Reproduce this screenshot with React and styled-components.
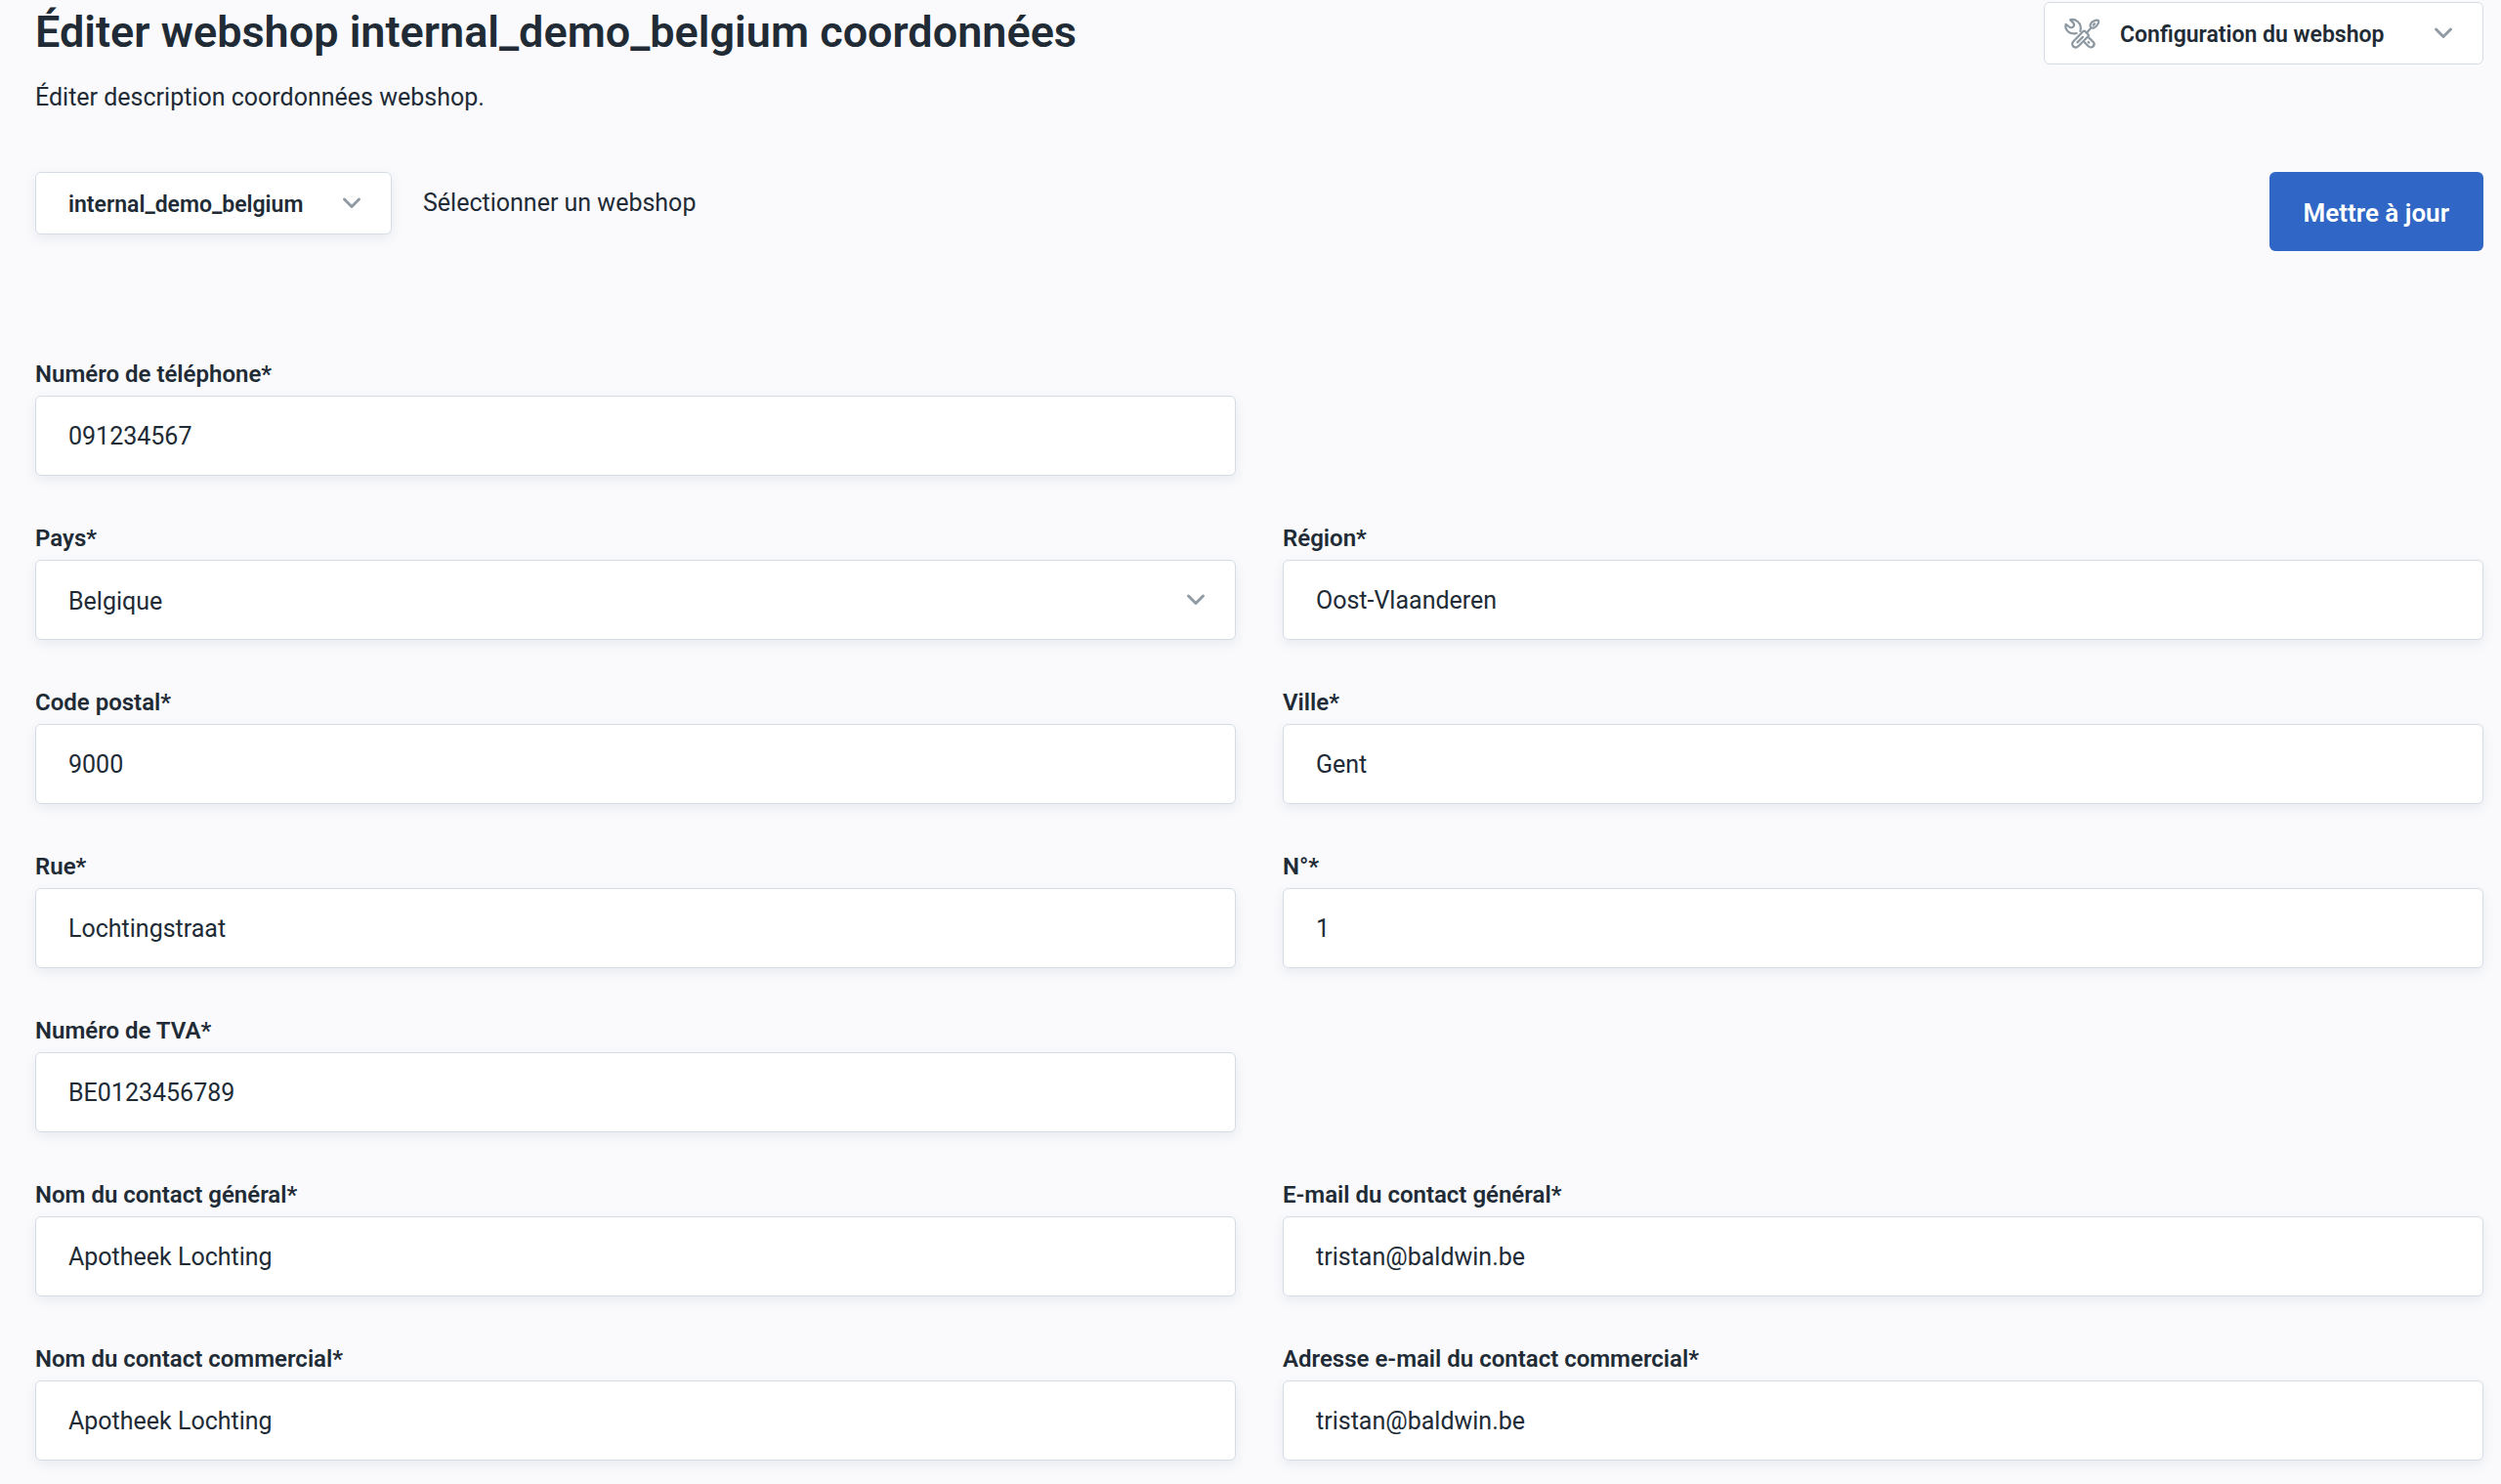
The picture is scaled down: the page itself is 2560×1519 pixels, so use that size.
import { useState } from "react";
import styled, { createGlobalStyle } from "styled-components";

const GlobalStyle = createGlobalStyle`
  * {
    box-sizing: border-box;
  }

  body {
    margin: 0;
    background-color: #fafafc;
    color: #212b36;
    font-family: Roboto, "Liberation Sans", sans-serif;
    font-size: 25px;
    line-height: 32px;
  }
`;

const Page = styled.main`
  display: flex;
  flex-direction: column;
  padding: 2px 18px 24px 36px;
`;

const Header = styled.header`
  display: flex;
  align-items: flex-start;
  justify-content: space-between;
`;

const Title = styled.h1`
  margin: 0;
  font-size: 45px;
  font-weight: 600;
  line-height: 62px;
`;

const Subtitle = styled.p`
  margin: 20px 0 0;
`;

const Toolbar = styled.div`
  display: flex;
  align-items: flex-start;
  justify-content: space-between;
  margin-top: 60px;
`;

const Picker = styled.div`
  display: flex;
  align-items: center;
  gap: 32px;
`;

const SelectBox = styled.div`
  position: relative;
  display: flex;
  align-items: center;
  min-width: ${(props) => props.$minWidth || "0"};
`;

const StyledSelect = styled.select`
  appearance: none;
  width: 100%;
  height: ${(props) => (props.$compact ? "64px" : "82px")};
  padding: 2px 80px 0 ${(props) => (props.$withIcon ? "77px" : "33px")};
  border: 1px solid #d5dce5;
  border-radius: 6px;
  background-color: #ffffff;
  box-shadow: ${(props) =>
    props.$flat ? "none" : "0 4px 12px rgba(60, 80, 120, 0.09)"};
  color: inherit;
  font-family: inherit;
  font-size: ${(props) => (props.$compact ? "23px" : "25px")};
  font-weight: ${(props) => (props.$compact ? 600 : 400)};
`;

const Chevron = styled.svg`
  position: absolute;
  right: 30px;
  width: 22px;
  height: 22px;
  fill: none;
  stroke: #919ba6;
  stroke-width: 3;
  stroke-linecap: round;
  stroke-linejoin: round;
  pointer-events: none;
`;

const Tools = styled.svg`
  position: absolute;
  left: 20px;
  width: 38px;
  height: 34px;
  fill: none;
  stroke: #8b98a2;
  stroke-width: 2.2;
  stroke-linecap: round;
  stroke-linejoin: round;
  pointer-events: none;
`;

const SubmitButton = styled.button`
  height: 81px;
  padding: 2px 35px 0;
  border: none;
  border-radius: 6px;
  background-color: #3066c5;
  color: #ffffff;
  font-family: inherit;
  font-size: 26px;
  font-weight: 600;
`;

const Form = styled.form`
  display: flex;
  flex-direction: column;
  gap: 48px;
  margin-top: 110px;
`;

const Row = styled.div`
  display: grid;
  grid-template-columns: 1fr 1fr;
  gap: 48px;
`;

const Field = styled.div`
  display: flex;
  flex-direction: column;
`;

const FieldLabel = styled.label`
  margin-bottom: 6px;
  font-size: 24px;
  font-weight: 600;
`;

const Input = styled.input`
  width: 100%;
  height: 82px;
  padding: 0 33px;
  border: 1px solid #d5dce5;
  border-radius: 6px;
  background-color: #ffffff;
  box-shadow: 0 4px 12px rgba(60, 80, 120, 0.09);
  color: inherit;
  font-family: inherit;
  font-size: 25px;
`;

const rows = [
  [{ id: "phone", label: "Numéro de téléphone", value: "091234567" }],
  [
    { id: "country", label: "Pays", value: "Belgique", select: true },
    { id: "region", label: "Région", value: "Oost-Vlaanderen" },
  ],
  [
    { id: "zip", label: "Code postal", value: "9000" },
    { id: "city", label: "Ville", value: "Gent" },
  ],
  [
    { id: "street", label: "Rue", value: "Lochtingstraat" },
    { id: "number", label: "N°", value: "1" },
  ],
  [{ id: "vat", label: "Numéro de TVA", value: "BE0123456789" }],
  [
    { id: "contact", label: "Nom du contact général", value: "Apotheek Lochting" },
    { id: "contactMail", label: "E-mail du contact général", value: "tristan@baldwin.be" },
  ],
  [
    { id: "sales", label: "Nom du contact commercial", value: "Apotheek Lochting" },
    { id: "salesMail", label: "Adresse e-mail du contact commercial", value: "tristan@baldwin.be" },
  ],
];

function ChevronIcon() {
  return (
    <Chevron viewBox="0 0 22 22" aria-hidden="true">
      <path d="M3.5 7 L11 14.5 L18.5 7" />
    </Chevron>
  );
}

function ToolsIcon() {
  return (
    <Tools viewBox="0 0 38 34" aria-hidden="true">
      {/* wrench head */}
      <path d="M17.4 15 C18.4 11 17.4 7.4 14.6 5 C12.2 3 9.4 2.6 7 3.2 L10.4 6.6 C12.2 9.2 9.8 12 6.8 11 L2.6 7.8 C1.8 10.6 2.8 13.6 5.2 15.6 C7.8 17.6 10.8 17.8 13.6 17" />
      {/* wrench handle */}
      <path d="M21.6 26.2 L25.6 30.2 C27.2 31.8 29.4 31.6 30.6 30.4 C31.8 29.2 31.8 27.2 30.4 25.8 L26.2 21.6" />
      <path d="M25.6 26 L26.2 26.6" />
      {/* screwdriver */}
      <path d="M22 14.8 L25.4 18.2 C26 18.8 26 19.6 25.4 20.2 L15.4 30.2 C13.8 31.8 11.6 31.8 10.2 30.4 C8.8 29 8.8 26.8 10.4 25.2 L20.4 15 C20.9 14.5 21.5 14.4 22 14.8 Z" />
      <path d="M14.4 26.4 L20 20.8" />
      <path d="M24 16.4 L28.4 11.6" />
      <path d="M27.6 8.4 C28.6 5.4 30.8 4.2 34 3.6 C36 3.4 36.4 4.6 36 6 C35 9 33.8 10.4 31.4 11.4 C28.8 12.4 27 10.8 27.6 8.4 Z" />
      <path d="M30.8 8.6 L32 7.4" />
    </Tools>
  );
}

function FormField({ id, label, value, select }) {
  const [current, setCurrent] = useState(value);
  const onChange = (event) => setCurrent(event.target.value);

  return (
    <Field>
      <FieldLabel htmlFor={id}>{label}*</FieldLabel>
      {select ? (
        <SelectBox>
          <StyledSelect id={id} value={current} onChange={onChange}>
            <option>{value}</option>
          </StyledSelect>
          <ChevronIcon />
        </SelectBox>
      ) : (
        <Input id={id} type="text" value={current} onChange={onChange} />
      )}
    </Field>
  );
}

function App() {
  return (
    <>
      <GlobalStyle />
      <Page>
        <Header>
          <div>
            <Title>Éditer webshop internal_demo_belgium coordonnées</Title>
            <Subtitle>Éditer description coordonnées webshop.</Subtitle>
          </div>
          <SelectBox $minWidth="450px">
            <StyledSelect aria-label="Configuration" $compact $withIcon $flat>
              <option>Configuration du webshop</option>
            </StyledSelect>
            <ToolsIcon />
            <ChevronIcon />
          </SelectBox>
        </Header>
        <Toolbar>
          <Picker>
            <SelectBox $minWidth="365px">
              <StyledSelect id="webshop" $compact>
                <option>internal_demo_belgium</option>
              </StyledSelect>
              <ChevronIcon />
            </SelectBox>
            <label htmlFor="webshop">Sélectionner un webshop</label>
          </Picker>
          <SubmitButton type="submit" form="details">
            Mettre à jour
          </SubmitButton>
        </Toolbar>
        <Form id="details" onSubmit={(event) => event.preventDefault()}>
          {rows.map((row) => (
            <Row key={row[0].id}>
              {row.map((field) => (
                <FormField key={field.id} {...field} />
              ))}
            </Row>
          ))}
        </Form>
      </Page>
    </>
  );
}

export default App;
